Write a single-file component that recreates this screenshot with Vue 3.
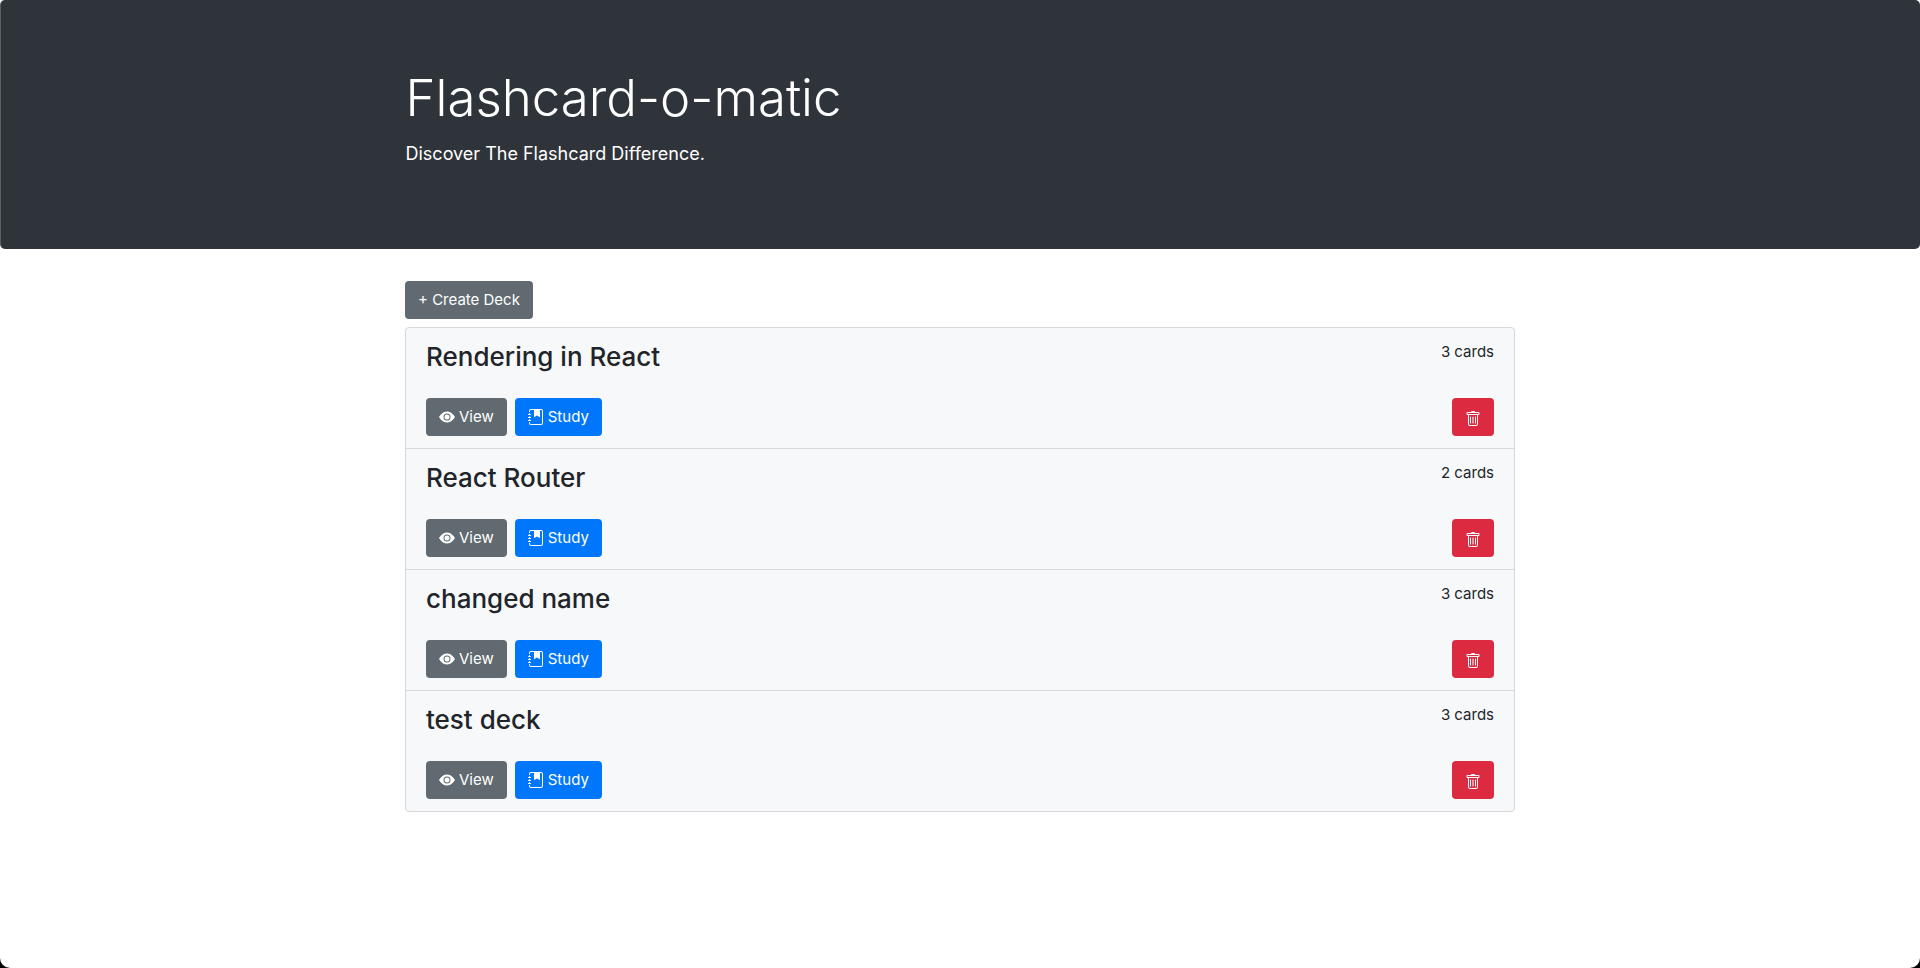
<script setup>
import { ref } from 'vue'

const decks = ref([
  { id: 1, name: 'Rendering in React', cards: 3 },
  { id: 2, name: 'React Router', cards: 2 },
  { id: 3, name: 'changed name', cards: 3 },
  { id: 4, name: 'test deck', cards: 3 },
])

function removeDeck(id) {
  decks.value = decks.value.filter((deck) => deck.id !== id)
}
</script>

<template>
  <div class="window">
    <header class="jumbotron">
      <div class="container">
        <h1 class="display">Flashcard-o-matic</h1>
        <p class="lead">Discover The Flashcard Difference.</p>
      </div>
    </header>
    <main class="container">
      <a class="btn secondary create" href="#new">+ Create Deck</a>
      <ul class="deck-list">
        <li v-for="deck in decks" :key="deck.id" class="deck">
          <div class="deck-head">
            <h2 class="deck-name">{{ deck.name }}</h2>
            <span class="count">{{ deck.cards }} cards</span>
          </div>
          <div class="actions">
            <a class="btn secondary" :href="`#deck-${deck.id}`">
              <svg class="icon" viewBox="0 0 16 16" fill="currentColor" aria-hidden="true">
                <path d="M10.5 8a2.5 2.5 0 1 1-5 0 2.5 2.5 0 0 1 5 0z" />
                <path d="M0 8s3-5.5 8-5.5S16 8 16 8s-3 5.5-8 5.5S0 8 0 8zm8 3.5a3.5 3.5 0 1 0 0-7 3.5 3.5 0 0 0 0 7z" />
              </svg>
              View
            </a>
            <a class="btn primary" :href="`#study-${deck.id}`">
              <svg class="icon" viewBox="0 0 16 16" fill="currentColor" aria-hidden="true">
                <path d="M6 1h6v7.3L9 6.6 6 8.3z" />
                <path d="M3 0h10a2 2 0 0 1 2 2v12a2 2 0 0 1-2 2H3a2 2 0 0 1-2-2v-1h1v1a1 1 0 0 0 1 1h10a1 1 0 0 0 1-1V2a1 1 0 0 0-1-1H3a1 1 0 0 0-1 1v1H1V2a2 2 0 0 1 2-2z" />
                <path d="M1 5v-.5a.5.5 0 0 1 1 0V5h.5a.5.5 0 0 1 0 1h-2a.5.5 0 0 1 0-1H1zm0 3v-.5a.5.5 0 0 1 1 0V8h.5a.5.5 0 0 1 0 1h-2a.5.5 0 0 1 0-1H1zm0 3v-.5a.5.5 0 0 1 1 0v.5h.5a.5.5 0 0 1 0 1h-2a.5.5 0 0 1 0-1H1z" />
              </svg>
              Study
            </a>
            <button class="btn danger" type="button" :aria-label="`Delete ${deck.name}`" @click="removeDeck(deck.id)">
              <svg class="icon trash" viewBox="0 0 16 16" fill="currentColor" aria-hidden="true">
                <path d="M5.5 5.5A.5.5 0 0 1 6 6v6a.5.5 0 0 1-1 0V6a.5.5 0 0 1 .5-.5zm2.500 0a.5.5 0 0 1 .5.5v6a.5.5 0 0 1-1 0V6a.5.5 0 0 1 .5-.5zm3 .5a.5.5 0 0 0-1 0v6a.5.5 0 0 0 1 0V6z" />
                <path fill-rule="evenodd" d="M14.500 3a1 1 0 0 1-1 1H13v9a2 2 0 0 1-2 2H5a2 2 0 0 1-2-2V4h-.5a1 1 0 0 1-1-1V2a1 1 0 0 1 1-1H6a1 1 0 0 1 1-1h2a1 1 0 0 1 1 1h3.500a1 1 0 0 1 1 1v1zM4.118 4 4 4.059V13a1 1 0 0 0 1 1h6a1 1 0 0 0 1-1V4.059L11.882 4H4.118zM2.500 3V2h11v1h-11z" />
              </svg>
            </button>
          </div>
        </li>
      </ul>
    </main>
  </div>
</template>

<style>
body {
  margin: 0;
  background: #000;
}
</style>

<style scoped>
.window,
.window * {
  box-sizing: border-box;
}
.window {
  min-height: 100vh;
  background: #fff;
  border-radius: 0 0 10px 10px;
  color: #212529;
  font: 400 15px/24px Inter, "Liberation Sans", sans-serif;
}
.container {
  width: 100%;
  max-width: 1140px;
  margin: 0 auto;
  padding: 0 15px;
}
.jumbotron {
  margin-bottom: 32px;
  padding: 64px 32px;
  background: #2f333a;
  border-left: 1px solid #5c6064;
  border-radius: 5px;
  color: #fff;
}
.display {
  margin: 0 0 8px;
  font-size: 51px;
  font-weight: 300;
  line-height: 67px;
}
.lead {
  margin: 0 0 16px;
  font-size: 18px;
  font-weight: 400;
  line-height: 30px;
}
.btn {
  display: inline-flex;
  align-items: center;
  justify-content: center;
  gap: 4px;
  height: 38px;
  padding: 0 13px;
  border: 0;
  border-radius: 4px;
  color: #fff;
  font: inherit;
  text-decoration: none;
  cursor: pointer;
}
.secondary {
  background: #606a70;
}
.primary {
  background: #0077fa;
}
.danger {
  margin-left: auto;
  background: #dc2a40;
}
.icon {
  width: 16px;
  height: 16px;
}
.trash {
  margin-top: 4px;
}
.create {
  margin-bottom: 8px;
}
.deck-list {
  margin: 0;
  padding: 0;
  list-style: none;
  background: #f7f8fa;
  border: 1px solid #d6d8db;
  border-radius: 4px;
}
.deck {
  padding: 12px 20px;
}
.deck + .deck {
  border-top: 1px solid #d6d8db;
}
.deck-head {
  display: flex;
  justify-content: space-between;
  align-items: flex-start;
  margin-bottom: 24px;
}
.deck-name {
  margin: 0;
  font-size: 26px;
  font-weight: 500;
  line-height: 34px;
}
.actions {
  display: flex;
  gap: 8px;
}
</style>
